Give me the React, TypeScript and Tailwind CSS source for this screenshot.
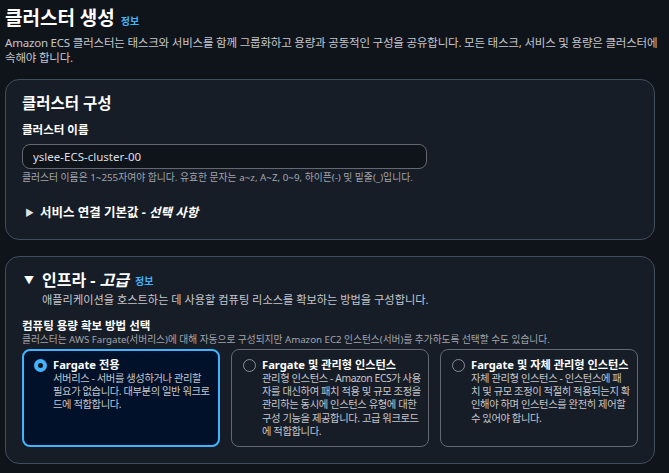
import React, { useState } from 'react';

type TileOption = {
    id: string;
    title: string;
    lines: string[];
};

const options: TileOption[] = [
    {
        id: 'fargate',
        title: 'Fargate 전용',
        lines: ['서버리스 - 서버를 생성하거나 관리할', '필요가 없습니다. 대부분의 일반 워크로', '드에 적합합니다.'],
    },
    {
        id: 'managed',
        title: 'Fargate 및 관리형 인스턴스',
        lines: [
            '관리형 인스턴스 - Amazon ECS가 사용',
            '자를 대신하여 패치 적용 및 규모 조정을',
            '관리하는 동시에 인스턴스 유형에 대한',
            '구성 기능을 제공합니다. 고급 워크로드',
            '에 적합합니다.',
        ],
    },
    {
        id: 'self',
        title: 'Fargate 및 자체 관리형 인스턴스',
        lines: [
            '자체 관리형 인스턴스 - 인스턴스에 패',
            '치 및 규모 조정이 적절히 적용되는지 확',
            '인해야 하며 인스턴스를 완전히 제어할',
            '수 있어야 합니다.',
        ],
    },
];

const Radio: React.FC<{ checked: boolean }> = ({ checked }) =>
    checked ? (
        <span className="mt-[1px] flex h-[13px] w-[13px] shrink-0 items-center justify-center rounded-full bg-[#42b4ff]">
            <span className="h-[5px] w-[5px] rounded-full bg-[#0f141a]" />
        </span>
    ) : (
        <span className="mt-[1px] h-[13px] w-[13px] shrink-0 rounded-full border-[1.5px] border-[#8c8c94]" />
    );

export default function App() {
    const [name, setName] = useState('yslee-ECS-cluster-00');
    const [selected, setSelected] = useState('fargate');

    return (
        <div
            className="min-h-[473px] w-[669px] bg-[#0f141a] px-[5px] pt-[4px] pb-[10px] text-[#dedee3]"
            style={{ fontFamily: '"Noto Sans", "Noto Sans CJK KR", sans-serif' }}
        >
            {/* Page header */}
            <div className="flex items-baseline gap-[6px]">
                <h1 className="text-[19px] leading-[28px] font-bold text-white">클러스터 생성</h1>
                <span className="text-[10px] font-bold text-[#42b4ff]">정보</span>
            </div>
            <p className="mt-[3px] text-[11.5px] leading-[15px] tracking-[-0.2px] whitespace-nowrap text-[#c6c6cd]">
                Amazon ECS 클러스터는 태스크와 서비스를 함께 그룹화하고 용량과 공동적인 구성을 공유합니다. 모든 태스크, 서비스 및 용량은 클러스터에
                <br />
                속해야 합니다.
            </p>

            {/* Cluster configuration */}
            <section className="mt-[14px] h-[161px] w-[650px] rounded-[14px] border border-[#414d5c] bg-[#161d26] px-[16px] pt-[12px]">
                <h2 className="text-[15.5px] leading-[22px] font-bold text-white">클러스터 구성</h2>
                <label className="mt-[8px] block text-[11.5px] leading-[16px] font-bold text-white">클러스터 이름</label>
                <input
                    value={name}
                    onChange={(e) => setName(e.target.value)}
                    className="mt-[6px] block h-[25px] w-[405px] rounded-[8px] border border-[#656871] bg-[#0f141a] px-[10px] text-[11.5px] text-[#dedee3] outline-none"
                />
                <p className="mt-[2px] text-[9.8px] leading-[14px] text-[#a4a4ad]">
                    클러스터 이름은 1~255자여야 합니다. 유효한 문자는 a~z, A~Z, 0~9, 하이픈(-) 및 밑줄(_)입니다.
                </p>
                <div className="mt-[19px] flex items-center gap-[6px] pl-[3px]">
                    <span className="text-[9px] text-[#dedee3]">▶</span>
                    <span className="text-[12.5px] leading-[18px] font-bold text-white">
                        서비스 연결 기본값 - <em className="italic">선택 사항</em>
                    </span>
                </div>
            </section>

            {/* Infrastructure */}
            <section className="mt-[16px] w-[650px] rounded-[14px] border border-[#414d5c] bg-[#161d26] px-[16px] pt-[11px] pb-[16px]">
                <div className="flex items-center gap-[8px] pl-[2px]">
                    <span className="text-[10px] text-white">▼</span>
                    <h2 className="text-[16px] leading-[24px] font-bold text-white">
                        인프라 - <em className="italic">고급</em>
                    </h2>
                    <span className="mt-[3px] -ml-[2px] text-[10px] font-bold text-[#42b4ff]">정보</span>
                </div>
                <p className="pl-[20px] text-[11.2px] leading-[16px] text-[#c6c6cd]">
                    애플리케이션을 호스트하는 데 사용할 컴퓨팅 리소스를 확보하는 방법을 구성합니다.
                </p>

                <div className="mt-[10px] text-[11.5px] leading-[15px] font-bold text-white">컴퓨팅 용량 확보 방법 선택</div>
                <p className="text-[9.7px] leading-[13px] whitespace-nowrap text-[#a4a4ad]">
                    클러스터는 AWS Fargate(서버리스)에 대해 자동으로 구성되지만 Amazon EC2 인스턴스(서버)를 추가하도록 선택할 수도 있습니다.
                </p>

                <div className="mt-[3px] grid grid-cols-3 gap-[11px]">
                    {options.map((opt) => {
                        const isOn = opt.id === selected;
                        return (
                            <button
                                key={opt.id}
                                onClick={() => setSelected(opt.id)}
                                className={
                                    isOn
                                        ? 'flex gap-[6px] rounded-[8px] border-2 border-[#42b4ff] bg-[#001129] pr-[6px] pl-[10px] pt-[7px] pb-[8px] text-left'
                                        : 'flex gap-[6px] rounded-[8px] border border-[#656871] bg-[#161d26] pr-[7px] pl-[11px] pt-[8px] pb-[8px] text-left'
                                }
                            >
                                <Radio checked={isOn} />
                                <div className="min-w-0">
                                    <div className="text-[11.2px] leading-[14px] font-bold whitespace-nowrap text-white">{opt.title}</div>
                                    <div className="text-[10.3px] leading-[13.2px] tracking-[-0.4px] text-[#c6c6cd]">
                                        {opt.lines.map((line) => (
                                            <div key={line} className="whitespace-nowrap">
                                                {line}
                                            </div>
                                        ))}
                                    </div>
                                </div>
                            </button>
                        );
                    })}
                </div>
            </section>
        </div>
    );
}
